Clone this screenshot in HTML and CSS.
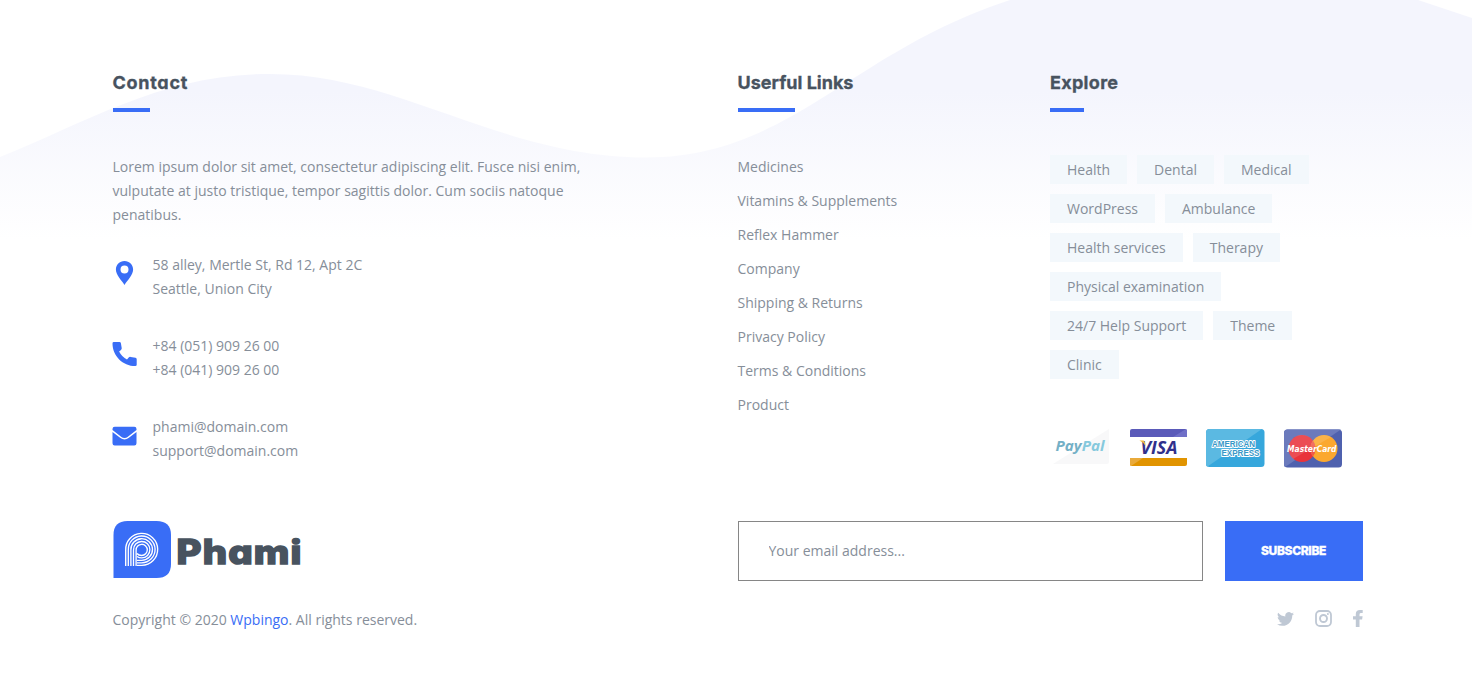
FILE: index.html
```html
<!DOCTYPE html>
<html lang="en">
<head>
<meta charset="utf-8">
<title>Phami</title>
<link rel="stylesheet" href="styles.css">
</head>
<body>
<footer class="footer">
  <svg class="wave" width="1472" height="240" viewBox="0 0 1472 240" aria-hidden="true">
    <defs><linearGradient id="fade" x1="0" y1="0" x2="0" y2="240" gradientUnits="userSpaceOnUse">
      <stop offset="0" stop-color="#f4f5fd"/><stop offset=".38" stop-color="#f4f5fd"/><stop offset="1" stop-color="#fff"/>
    </linearGradient></defs>
    <path fill="url(#fade)" d="M0 157C90 121 163 74 270 74C400 74 500 157.500 646 157.500C790 157.500 850 52 1010 0H1418L1472 18V240H0Z"/>
  </svg>
  <div class="container">
    <div class="columns">
      <section>
        <h2 class="title title-contact">Contact</h2>
        <p class="intro">Lorem ipsum dolor sit amet, consectetur adipiscing elit. Fusce nisi enim, vulputate at justo tristique, tempor sagittis dolor. Cum sociis natoque penatibus.</p>
        <ul class="contacts">
          <li><svg class="contact-icon" viewBox="0 0 24 24"><path fill-rule="evenodd" d="M12 0C7 0 3.400 3.800 3.400 8.600C3.400 14.200 9 19.200 12 24C15 19.200 20.600 14.200 20.600 8.600C20.600 3.800 17 0 12 0ZM12 4.600A4 4 0 1 1 12 12.600A4 4 0 0 1 12 4.600Z"/></svg><span>58 alley, Mertle St, Rd 12, Apt 2C<br>Seattle, Union City</span></li>
          <li><svg class="contact-icon" viewBox="0 0 24 24"><path d="M1.300 0H7Q8.200 0 8.400 1.200L9.200 6Q9.400 7.200 8.500 7.900L6.600 9.400Q9.400 14.800 14.500 17.400L16.200 15.500Q17 14.600 18.200 14.900L23 15.700Q24.200 16 24.200 17.200V22.700Q24.200 24 22.800 24C10.300 24 0 13.700 0 1.400Q0 0 1.300 0Z"/></svg><span>+84 (051) 909 26 00<br>+84 (041) 909 26 00</span></li>
          <li><svg class="contact-icon mail" viewBox="0 0 24 24"><path d="M2.200 2.800H21.800Q24 2.800 24 5V6Q18 10.700 15.400 12.700Q12 15.300 8.600 12.700Q6 10.700 0 6V5Q0 2.800 2.200 2.800ZM0 8.100L7.600 13.800Q12 17.100 16.400 13.800L24 8.100V19.200Q24 21.400 21.800 21.400H2.200Q0 21.400 0 19.200Z"/></svg><span>phami@domain.com<br>support@domain.com</span></li>
        </ul>
      </section>
      <section>
        <h2 class="title title-links">Userful Links</h2>
        <ul class="links">
          <li>Medicines</li><li>Vitamins &amp; Supplements</li><li>Reflex Hammer</li><li>Company</li><li>Shipping &amp; Returns</li><li>Privacy Policy</li><li>Terms &amp; Conditions</li><li>Product</li>
        </ul>
      </section>
      <section>
        <h2 class="title title-explore">Explore</h2>
        <ul class="tags">
          <li>Health</li><li>Dental</li><li>Medical</li><li>WordPress</li><li>Ambulance</li><li>Health services</li><li>Therapy</li><li>Physical examination</li><li>24/7 Help Support</li><li>Theme</li><li>Clinic</li>
        </ul>
        <div class="cards">
          <svg class="card" viewBox="0 0 60 40">
            <path fill="#f8f8f9" d="M3 36L59 1V34Q59 36 57 36Z"/>
            <text class="card-text" x="5.500" y="23" font-size="14" textLength="49" lengthAdjust="spacingAndGlyphs"><tspan fill="#74b0c6">Pay</tspan><tspan fill="#86c9dd">Pal</tspan></text>
          </svg>
          <svg class="card" viewBox="0 0 60 40">
            <path fill="#5a5ab9" d="M2 9V3Q2 1 4 1H57Q59 1 59 3V9Z"/><path fill="#7070c8" d="M45 9L58 1Q59 2 59 3V9Z"/>
            <path fill="#e19400" d="M2 30H59V36Q59 38 57 38H4Q2 38 2 36Z"/><path fill="#e9aa3b" d="M2 30H15L3 38Q2 38 2 36Z"/>
            <text class="card-text" x="12.500" y="26" font-size="17.500" textLength="37" lengthAdjust="spacingAndGlyphs" fill="#30308c">VISA</text><path fill="#efb83f" d="M11.500 12.500H15.500Q17 13 17.500 18Q15 14 11.500 12.500Z"/>
          </svg>
          <svg class="card" viewBox="0 0 60 40">
            <rect x="1" y="1" width="58.500" height="38" rx="3.500" fill="#36a7dc"/><path fill="#5bb9e2" d="M1 37V4.500Q1 1 4.500 1H57L2.500 38.500Q1 38 1 37Z"/>
            <g class="amex" font-size="9"><text x="7" y="18.500" textLength="43" lengthAdjust="spacingAndGlyphs">AMERICAN</text><text x="16.500" y="28" textLength="38" lengthAdjust="spacingAndGlyphs">EXPRESS</text></g>
          </svg>
          <svg class="card" viewBox="0 0 60 40">
            <rect x="1" y="1.500" width="58" height="38" rx="3.500" fill="#4f61ae"/><path fill="#6b7abc" d="M1 37V5Q1 1.500 4.500 1.500H58L2 39Q1 38 1 37Z"/>
            <circle cx="19" cy="20.500" r="13.500" fill="#e9333b"/><circle cx="41" cy="20.500" r="13.500" fill="#fba82f"/><path fill="#ef5a4a" d="M30 12.500A13.500 13.500 0 0 0 30 28.500A13.500 13.500 0 0 0 30 12.500Z"/>
            <path fill="#fff" opacity=".13" d="M6 24A13.500 13.500 0 0 1 30 12.500A13.500 13.500 0 0 1 48 9L10 31Q7 28 6 24Z"/>
            <text class="card-text mastercard" x="4" y="23.500" font-size="9.500" textLength="49.500" lengthAdjust="spacingAndGlyphs">MasterCard</text>
          </svg>
        </div>
      </section>
    </div>
    <div class="lower">
      <svg class="logo" width="192" height="60" viewBox="0 0 192 60">
        <path fill="#396df6" d="M.5 57V14Q.5 0 14.500 0H43.500Q58 0 58 14V43Q58 57 43.500 57Z"/>
        <g fill="none" stroke="#fff" stroke-width="1.350"><path d="M12.700 45V29.500A16 16 0 1 1 28.700 44.400H24"/><path d="M15.300 45V29.200A13.400 13.400 0 1 1 28.700 41.800H24"/><path d="M17.900 45V29.100A10.800 10.800 0 1 1 28.700 39.300H24"/><path d="M20.500 45V29A8.200 8.200 0 1 1 28.700 36.900Q26 36.900 24 35.500"/><path d="M23.100 45V29A5.600 5.600 0 1 1 28.700 34.500Q25.500 34.500 24 32.500"/></g>
        <text class="logo-text" x="63.500" y="43" textLength="126" lengthAdjust="spacingAndGlyphs">Phami</text>
      </svg>
      <form class="subscribe"><input class="email" type="text" placeholder="Your email address..." aria-label="Email"><button class="button" type="button">SUBSCRIBE</button></form>
    </div>
    <div class="bottom">
      <p class="copyright">Copyright © 2020 <a class="brand">Wpbingo</a>. All rights reserved.</p>
      <div class="social">
        <svg width="17" height="18" viewBox="0 0 24 24"><path d="M24 4.600a10 10 0 0 1-2.800.8a5 5 0 0 0 2.100-2.700a10 10 0 0 1-3.100 1.200a4.900 4.900 0 0 0-8.400 4.500A14 14 0 0 1 1.700 3.200a4.900 4.900 0 0 0 1.500 6.500a5 5 0 0 1-2.200-.6a4.900 4.900 0 0 0 3.900 4.900a5 5 0 0 1-2.200.1a4.900 4.900 0 0 0 4.600 3.400A10 10 0 0 1 0 19.500a14 14 0 0 0 7.500 2.200c9.100 0 14.300-7.700 14-14.600A10 10 0 0 0 24 4.600Z"/></svg>
        <svg width="17" height="17" viewBox="0 0 17 17"><rect x="1" y="1" width="15" height="15" rx="4" fill="none" stroke="#bfc8d4" stroke-width="1.800"/><circle cx="8.500" cy="8.500" r="3.500" fill="none" stroke="#bfc8d4" stroke-width="1.900"/><circle cx="12.900" cy="4.100" r="1"/></svg>
        <svg width="10" height="17" viewBox="0 0 10 17"><path d="M2.800 17V9.600H0V6.200H2.800V4Q2.800 0 7 0H9.700V3.100H8Q6.500 3.100 6.500 4.500V6.200H9.600L9.100 9.600H6.500V17Z"/></svg>
      </div>
    </div>
  </div>
</footer>
</body>
</html>
```

FILE: styles.css
```css
* { box-sizing: border-box; }
body { margin: 0; background: #fff; color: #868e99; font: 14px/24px "Open Sans", sans-serif; }
ul { list-style: none; margin: 0; padding: 0; }
p, h2 { margin: 0; }
.footer { position: relative; height: 683px; overflow: hidden; }
.wave { position: absolute; top: 0; left: 0; }
.container { position: relative; width: 1250.5px; margin-left: 112.5px; padding-top: 70px; }
.columns { display: grid; grid-template-columns: 625px 312.5px 312.5px; height: 451px; }
.title { display: flex; flex-direction: column; height: 85px; color: #48535f; font: 700 18px/26px Inter, sans-serif; font-feature-settings: "cv11"; -webkit-text-stroke: .3px #48535f; white-space: nowrap; }
.title::after { content: ""; height: 4px; margin-top: 12px; background: #396df6; }
.title-contact { letter-spacing: .72px; }
.title-contact::after { width: 37px; }
.title-links { letter-spacing: 0; }
.title-links::after { width: 57px; }
.title-explore { letter-spacing: .3px; }
.title-explore::after { width: 34px; }
.intro { width: 490px; margin-bottom: 26px; }
.contacts { display: grid; gap: 33px; }
.contacts li { display: flex; gap: 16px; }
.contact-icon { width: 25px; height: 24px; margin: 8px 0 0 -1px; fill: #396df6; }
.mail { margin-top: 9px; }
.links { display: grid; gap: 10px; }
.tags { display: flex; flex-wrap: wrap; gap: 10px; width: 270px; }
.tags li { height: 29px; padding: 0 17px; line-height: 29px; background: #f3f8fc; }
.cards { display: flex; gap: 17.6px; margin-top: 49px; }
.card { width: 60px; height: 40px; }
.card-text { font-family: "Open Sans", sans-serif; font-weight: 700; font-style: italic; }
.mastercard { font-family: "DejaVu Sans", sans-serif; fill: #fff; }
.amex { font-family: "Liberation Sans", sans-serif; font-weight: 700; fill: #3798c8; stroke: #fff; stroke-width: 2px; stroke-linejoin: round; paint-order: stroke; }
.lower { display: flex; justify-content: space-between; height: 60px; }
.logo-text { font: 800 33.5px Inter, sans-serif; font-feature-settings: "cv11"; letter-spacing: 1px; fill: #48535f; stroke: #48535f; stroke-width: 1.5px; }
.subscribe { display: flex; gap: 22px; }
.email { width: 465px; height: 60px; padding: 0 30px 2px 29.5px; border: 1px solid #868686; background: #fff; color: #868e99; font: 14px "Open Sans", sans-serif; }
.email::placeholder { color: #868e99; opacity: 1; }
.button { width: 138px; height: 60px; padding: 0 1px 1px 0; border: 0; background: #396df6; color: #fff; font: 800 12px Inter, sans-serif; letter-spacing: -.35px; -webkit-text-stroke: .3px #fff; }
.bottom { display: flex; justify-content: space-between; margin-top: 27px; }
.brand { color: #396df6; }
.social { display: flex; align-items: center; gap: 21px; height: 21px; padding-right: .5px; fill: #bfc8d4; }
```
